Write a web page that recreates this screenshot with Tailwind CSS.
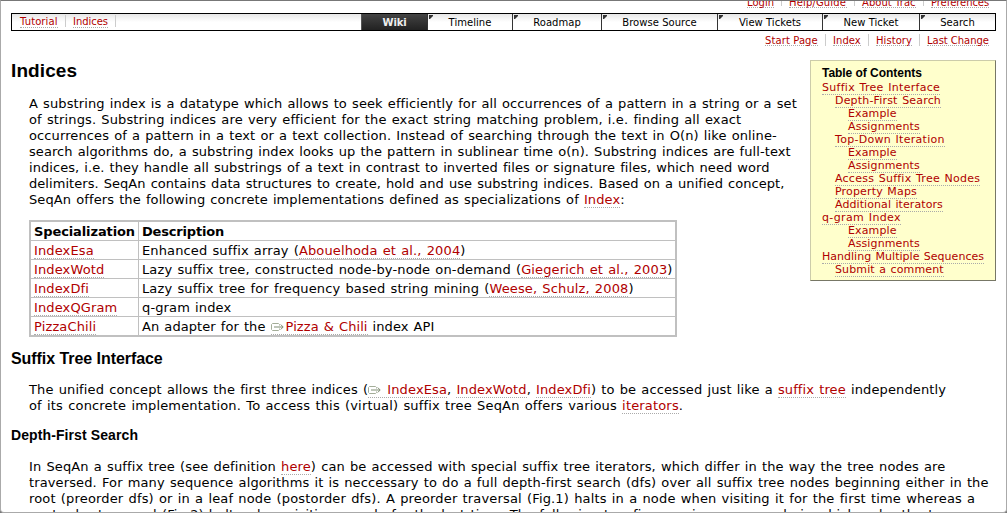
<!DOCTYPE html>
<html lang="en">
<head>
<meta charset="utf-8">
<title>Indices</title>
<script src="https://cdn.jsdelivr.net/npm/@tailwindcss/browser@4"></script>
</head>
<body class="h-[513px] w-[1007px] overflow-hidden bg-[#777] font-['DejaVu_Sans',sans-serif] text-[13px] leading-4 tracking-[0.1px] text-black [word-spacing:0.87px] [&_a]:border-b [&_a]:border-dotted [&_a]:border-[#aaa] [&_a]:text-[#b00000]">
<svg class="hidden"><symbol id="ext" viewBox="0 0 13 9"><path d="M8.5 2.5v-1L7.5.5h-6L.5 1.5v5l1 1h6l1-1v-1" fill="none" stroke="#a3ad98"/><path d="M3 4h9" stroke="#7f8d72"/><path d="M9.7 1.5L12.2 4 9.7 6.5" fill="none" stroke="#7f8d72"/></symbol>
<symbol id="corner" viewBox="0 0 4 4"><path d="M0 0h4v1L1 4H0z" fill="#333"/></symbol></svg>
<div class="h-[513px] overflow-hidden rounded-b-[4px] border border-[#aaa] border-t-[#777] bg-white pl-[10px] pr-[10px]">
  <div class="flex h-3 justify-end pr-[7px] text-[10px] leading-[10px] tracking-[0.05px] [word-spacing:0]">
    <div class="-mt-[5px] flex h-3 items-start gap-[7px] [&_a]:h-3 [&_a]:pt-[2px]">
      <a class="w-[27px]">Login</a><i class="h-[10px] w-px bg-[#ccc]"></i>
      <a class="w-[58px] whitespace-nowrap tracking-[0.15px]">Help/Guide</a><i class="h-[10px] w-px bg-[#ccc]"></i>
      <a class="w-[54px] whitespace-nowrap">About Trac</a><i class="h-[10px] w-px bg-[#ccc]"></i>
      <a class="w-[58px] whitespace-nowrap tracking-[-0.07px]">Preferences</a>
    </div>
  </div>
  <nav class="flex h-[18px] w-[985px] justify-between border border-black bg-linear-to-b from-[#e6e6e6] to-white to-50% text-[10px] [word-spacing:0]">
    <div class="flex items-start gap-[7px] pl-2 pt-px leading-[10px] [&_a]:pt-[2px]">
      <a class="w-[38px]">Tutorial</a><i class="h-3 w-px bg-[#ccc]"></i>
      <a class="w-[35px] tracking-[-0.04px]">Indices</a><i class="h-3 w-px bg-[#ccc]"></i>
    </div>
    <div class="flex h-4 overflow-hidden text-center leading-[18px] tracking-[0.04px]">
      <div class="w-[66px] border-l border-[#555] bg-linear-to-b from-[#444] to-[#222] font-bold tracking-[-0.13px] text-[#eee]">Wiki</div>
      <div class="w-[85px] border-l border-[#333]"><svg class="float-left -mr-[5px] ml-px mt-px size-1"><use href="#corner"/></svg>Timeline</div>
      <div class="w-[89px] border-l border-[#333]"><svg class="float-left -mr-[5px] ml-px mt-px size-1"><use href="#corner"/></svg>Roadmap</div>
      <div class="w-[116px] border-l border-[#333]"><svg class="float-left -mr-[5px] ml-px mt-px size-1"><use href="#corner"/></svg>Browse Source</div>
      <div class="w-[105px] border-l border-[#333]"><svg class="float-left -mr-[5px] ml-px mt-px size-1"><use href="#corner"/></svg>View Tickets</div>
      <div class="w-[97px] border-l border-[#333]"><svg class="float-left -mr-[5px] ml-px mt-px size-1"><use href="#corner"/></svg>New Ticket</div>
      <div class="w-[76px] border-l border-[#333]"><svg class="float-left -mr-[5px] ml-px mt-px size-1"><use href="#corner"/></svg>Search</div>
    </div>
  </nav>
  <div class="flex h-[29px] items-start justify-end gap-[7px] pr-[7px] pt-[3px] text-[10px] leading-[10px] tracking-[0.05px] [word-spacing:0] [&_a]:h-3 [&_a]:pt-[2px]">
    <a class="w-[53px] whitespace-nowrap tracking-[0.1px]">Start Page</a><i class="h-3 w-px bg-[#ccc]"></i>
    <a class="w-[28px]">Index</a><i class="h-3 w-px bg-[#ccc]"></i>
    <a class="w-[36px]">History</a><i class="h-3 w-px bg-[#ccc]"></i>
    <a class="w-[62px] whitespace-nowrap tracking-[-0.03px]">Last Change</a>
  </div>

  <div class="flex h-[285px] w-[985px] justify-between">
    <main class="w-[790px] whitespace-nowrap">
      <h1 class="h-9 pt-px font-['Liberation_Sans',sans-serif] text-[19px] font-bold leading-5">Indices</h1>
      <p class="pl-[18px]">
        A substring index is a datatype which allows to seek efficiently for all occurrences of a pattern in a string or a set<br>
        <span class="tracking-[0.13px]">of strings. Substring indices are very efficient for the exact string matching problem, i.e. finding all exact</span><br>
        <span class="tracking-[0.11px]">occurrences of a pattern in a text or a text collection. Instead of searching through the text in O(n) like online-</span><br>
        <span class="tracking-[0.08px]">search algorithms do, a substring index looks up the pattern in sublinear time o(n). Substring indices are full-text</span><br>
        <span class="tracking-[0.06px]">indices, i.e. they handle all substrings of a text in contrast to inverted files or signature files, which need word</span><br>
        <span class="tracking-[0.05px]">delimiters. SeqAn contains data structures to create, hold and use substring indices. Based on a unified concept,</span><br>
        SeqAn offers the following concrete implementations defined as specializations of <a>Index</a>:
      </p>
      <table class="ml-[18px] mt-3 w-[648px] table-fixed border-separate border-spacing-0 border-2 border-[#c0c0c0] leading-4 tracking-[0.13px] [&_td]:h-[19px] [&_td]:border-t [&_td]:border-[#c0c0c0] [&_td]:p-0 [&_td]:pl-[3px] [&_td]:pt-[2px] [&_td+td]:border-l">
        <tr class="text-left"><th class="h-[18px] w-[107px] p-0 pl-[3px] pt-[2px] tracking-[-0.11px]">Specialization</th><th class="border-l border-[#c0c0c0] p-0 pl-[3px] pt-[2px] tracking-[-0.19px]">Description</th></tr>
        <tr><td><a>IndexEsa</a></td><td>Enhanced suffix array (<a>Abouelhoda et al., 2004</a>)</td></tr>
        <tr><td><a>IndexWotd</a></td><td>Lazy suffix tree, constructed node-by-node on-demand (<a>Giegerich et al., 2003</a>)</td></tr>
        <tr><td><a>IndexDfi</a></td><td>Lazy suffix tree for frequency based string mining (<a>Weese, Schulz, 2008</a>)</td></tr>
        <tr><td><a>IndexQGram</a></td><td>q-gram index</td></tr>
        <tr><td><a>PizzaChili</a></td><td class="tracking-[0.07px]">An adapter for the <a><svg class="mr-[2px] inline h-[9px] w-[13px] align-[-1px]"><use href="#ext"/></svg>Pizza &amp; Chili</a> index API</td></tr>
      </table>
    </main>
    <aside class="h-[221px] w-[186px] whitespace-nowrap border border-[#ccccaa] border-b-[#777766] border-r-[#777766] bg-[#ffffcc] pl-[11px] pt-[5px] text-[11px] leading-[13px] tracking-[0.12px]">
      <h4 class="h-[15px] font-['Liberation_Sans',sans-serif] text-[12px] font-bold leading-[14px] tracking-[-0.04px] [word-spacing:0]">Table of Contents</h4>
      <ul>
        <li class="tracking-[0.28px]"><a>Suffix Tree Interface</a></li>
        <li class="pl-[13px] tracking-[0.18px]"><a>Depth-First Search</a></li>
        <li class="pl-[26px]"><a>Example</a></li>
        <li class="pl-[26px]"><a>Assignments</a></li>
        <li class="pl-[13px] tracking-[0.28px]"><a>Top-Down Iteration</a></li>
        <li class="pl-[26px]"><a>Example</a></li>
        <li class="pl-[26px]"><a>Assignments</a></li>
        <li class="pl-[13px] tracking-[0.24px]"><a>Access Suffix Tree Nodes</a></li>
        <li class="pl-[13px] tracking-[0.16px]"><a>Property Maps</a></li>
        <li class="pl-[13px] tracking-[0.08px]"><a>Additional iterators</a></li>
        <li class="tracking-[0.36px]"><a>q-gram Index</a></li>
        <li class="pl-[26px]"><a>Example</a></li>
        <li class="pl-[26px]"><a>Assignments</a></li>
        <li class="tracking-[0.02px]"><a>Handling Multiple Sequences</a></li>
        <li class="pl-[13px]"><a>Submit a comment</a></li>
      </ul>
    </aside>
  </div>

  <div class="whitespace-nowrap">
    <h2 class="h-[37px] pt-1 font-['Liberation_Sans',sans-serif] text-[16px] font-bold leading-5 tracking-[-0.06px] [word-spacing:0]">Suffix Tree Interface</h2>
    <p class="pl-[18px] tracking-[0.12px]">
      The unified concept allows the first three indices (<a><svg class="mr-px inline h-[9px] w-[13px] align-[-1px]"><use href="#ext"/></svg> IndexEsa</a>, <a>IndexWotd</a>, <a>IndexDfi</a>) to be accessed just like a <a>suffix tree</a> independently<br>
      <span class="tracking-[0.17px]">of its concrete implementation. To access this (virtual) suffix tree SeqAn offers various <a>iterators</a>.</span>
    </p>
    <h3 class="h-[44px] pt-[11px] font-['Liberation_Sans',sans-serif] text-[14px] font-bold leading-5 [word-spacing:0]">Depth-First Search</h3>
    <p class="pl-[18px] pt-px tracking-[0.12px]">
      In SeqAn a suffix tree (see definition <a>here</a>) can be accessed with special suffix tree iterators, which differ in the way the tree nodes are<br>
      traversed. For many sequence algorithms it is neccessary to do a full depth-first search (dfs) over all suffix tree nodes beginning either in the<br>
      <span class="tracking-[0.16px]">root (preorder dfs) or in a leaf node (postorder dfs). A preorder traversal (Fig.1) halts in a node when visiting it for the first time whereas a</span><br>
      postorder traversal (Fig.2) halts when visiting a node for the last time. The following two figures give an example in which order the tree
    </p>
  </div>
</div>
</body>
</html>
